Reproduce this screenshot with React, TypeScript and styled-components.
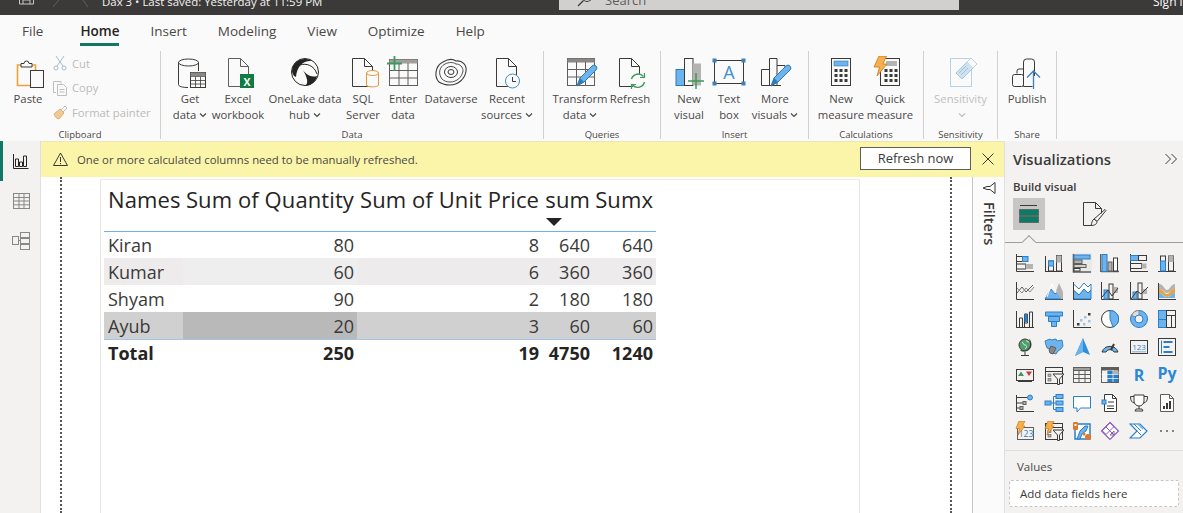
import React from "react";
import styled, { createGlobalStyle } from "styled-components";

const D = "#3b3a39";
const B = "#6db4ee";
const S = "#2b7fc9";
const G = "#b5b3b1";
const F = "'Open Sans', 'Noto Sans', sans-serif";

const Global = createGlobalStyle`
  html, body { margin: 0; padding: 0; background: #fff; }
  body { font-family: ${F}; overflow: hidden; }
  * { box-sizing: border-box; }
`;

const Shell = styled.div`
  width: 1183px; height: 513px; overflow: hidden; display: flex; flex-direction: column;
`;
const TitleBar = styled.header`
  height: 15px; flex: none; background: #3b3a39; display: flex; align-items: flex-end; overflow: hidden; color: #fff;
`;
const TitleLeft = styled.div`
  width: 559px; flex: none; display: flex; align-items: flex-end; padding: 0 0 5px 17px; height: 100%;
`;
const TitleText = styled.span`
  font-size: 11.45px; line-height: 16px; margin-left: 8px; white-space: nowrap; color: #f3f2f1;
`;
const SearchBox = styled.div`
  width: 400px; flex: none; height: 20px; margin-bottom: 5px; background: #d2d0ce; border-radius: 3px 3px 0 0;
  display: flex; align-items: flex-end; padding: 0 0 2px 18px; gap: 12px; font-size: 13px; line-height: 16px; color: #605e5c;
`;
const SignIn = styled.div`
  flex: 1; text-align: left; font-size: 12px; line-height: 16px; padding: 0 0 5px 194px; color: #fff; white-space: nowrap; min-width: 0;
`;
const Tabs = styled.nav`
  height: 35px; flex: none; background: #fafafa; display: flex; padding-left: 22px; gap: 31px;
`;
const Tab = styled.div<{ $on?: boolean }>`
  height: 31px; padding-top: 6px; font-size: 13.5px; line-height: 20px; color: ${p => (p.$on ? "#252423" : "#4a4847")};
  font-weight: ${p => (p.$on ? 600 : 400)}; margin-left: ${p => (p.$on ? "6px" : "0")};
  border-bottom: 3px solid ${p => (p.$on ? "#117865" : "transparent")}; white-space: nowrap;
`;
const Ribbon = styled.section`
  height: 91px; flex: none; background: #fafafa; display: flex; padding-top: 1px;
`;
const Group = styled.div<{ $w: number; $pad?: number }>`
  width: ${p => p.$w}px; height: 88px; flex: none; border-right: 1px solid #d2d0ce; display: flex; flex-direction: column; padding-left: ${p => p.$pad ?? 0}px;
`;
const GroupBody = styled.div`
  flex: 1; display: flex; padding-top: 5px; min-height: 0;
`;
const GroupLabel = styled.div<{ $pad?: number }>`
  height: 16px; margin-left: -${p => p.$pad ?? 0}px; margin-bottom: -4px; font-size: 9.5px; line-height: 16px; text-align: center; color: #4a4847;
`;
const RibBtn = styled.div<{ $w: number; $off?: boolean }>`
  width: ${p => p.$w}px; flex: none; display: flex; flex-direction: column; align-items: center;
  color: ${p => (p.$off ? "#c0bebc" : "#4a4847")}; font-size: 11.3px; line-height: 16px; text-align: center; white-space: nowrap;
  svg { display: block; }
`;
const RibIcon = styled.svg`
  width: 36px; height: 34px; flex: none; margin-bottom: 1px;
`;
const Chev = styled.svg`
  width: 8px; height: 6px; margin-left: 3px; display: inline-block !important; vertical-align: 1px;
`;
const SmallCol = styled.div`
  display: flex; flex-direction: column; margin: -5px 0 0 4px;
`;
const SmallItem = styled.div`
  height: 24.5px; flex: none; display: flex; align-items: center; gap: 5px; padding-left: 1px; font-size: 11.25px; color: #bdbbb9; white-space: nowrap;
`;
const Main = styled.div`
  flex: 1; display: flex; min-height: 0;
`;
const LeftNav = styled.aside`
  width: 41px; flex: none; background: #f3f2f1; border-right: 1px solid #e1dfdd; display: flex; flex-direction: column;
`;
const NavItem = styled.div<{ $on?: boolean }>`
  height: 40px; display: flex; align-items: center; justify-content: center; border-left: 3px solid ${p => (p.$on ? "#117865" : "transparent")};
  padding-right: 1px;
`;
const Center = styled.div`
  width: 963px; flex: none; display: flex; flex-direction: column;
`;
const Banner = styled.div`
  height: 36px; flex: none; background: #fbf5a9; display: flex; align-items: center; padding-left: 12px; color: #4a4847; font-size: 11.35px;
  box-shadow: inset 0 1px 0 #e9e6b8;
`;
const BannerText = styled.span`
  margin-left: 9px; flex: 1;
`;
const BannerButton = styled.div`
  width: 111px; height: 23px; background: #fff; border: 1px solid #605e5c; font-size: 13px; line-height: 21px; text-align: center; color: #3b3a39; margin-top: -1px;
`;
const BannerClose = styled.div`
  width: 33px; display: flex; justify-content: center;
`;
const Stage = styled.div`
  flex: 1; display: flex; min-height: 0; background: #fff;
`;
const Canvas = styled.div`
  width: 931px; flex: none; padding-left: 19px; overflow: hidden;
`;
const Page = styled.div`
  width: 892px; height: 100%; border-left: 2px dotted #555; border-right: 2px dotted #555; padding: 2px 0 0 38px;
`;
const Visual = styled.div`
  width: 760px; height: 400px; border: 1px solid #e9e8e7; padding-left: 3px;
`;
const Grid = styled.div`
  display: grid; grid-template-columns: 79px 174px 185px 51px 63px; width: 552px;
`;
const Head = styled.div`
  grid-column: 1 / -1; display: grid; grid-template-columns: subgrid; height: 52px; border-bottom: 1px solid #6fb0ea;
`;
const HeadCell = styled.div<{ $left?: boolean }>`
  font-size: 22px; line-height: 38px; color: #252423; white-space: nowrap; padding: 0 3px 0 4px; position: relative;
  letter-spacing: 0.1px; display: flex; justify-content: ${p => (p.$left ? "flex-start" : "flex-end")};
`;
const SortMark = styled.div`
  position: absolute; left: 4px; top: 38px; width: 0; height: 0; border-left: 8px solid transparent; border-right: 8px solid transparent; border-top: 8px solid #252423;
`;
const Row = styled.div<{ $bg: string; $h: number; $line?: boolean }>`
  grid-column: 1 / -1; display: grid; grid-template-columns: subgrid; height: ${p => p.$h}px; background: ${p => p.$bg};
  ${p => (p.$line ? "border-bottom: 1px solid #a0c6ea;" : "")}
`;
const Cell = styled.div<{ $left?: boolean; $bold?: boolean; $bar?: string }>`
  font-size: 18px; display: flex; align-items: center; justify-content: ${p => (p.$left ? "flex-start" : "flex-end")};
  padding: ${p => (p.$bold ? "0 3px 2px 4px" : "0 3px 0 4px")}; color: ${p => (p.$bold ? "#252423" : "#3b3a39")}; font-weight: ${p => (p.$bold ? 700 : 400)};
  background: ${p => p.$bar ?? "transparent"}; white-space: nowrap;
`;
const FilterStrip = styled.div`
  flex: 1; background: #fbfbfb; border-left: 1px solid #c8c6c4; display: flex; flex-direction: column; align-items: center; padding-top: 4px; gap: 7px;
`;
const FilterLabel = styled.div`
  writing-mode: vertical-rl; font-size: 14.5px; font-weight: 600; color: #3b3a39; line-height: 16px;
`;
const Panel = styled.aside`
  flex: 1; background: #f3f2f1; border-left: 1px solid #e1dfdd; display: flex; flex-direction: column; min-width: 0;
`;
const PanelHead = styled.div`
  display: flex; justify-content: space-between; align-items: center; padding: 8px 5px 1px 8px; height: 29px;
  font-size: 14.8px; font-weight: 600; line-height: 20px; color: #3b3a39;
`;
const BuildLabel = styled.div`
  margin-top: 9px; padding-left: 8px; font-size: 11.5px; font-weight: 600; line-height: 16px; color: #3b3a39;
`;
const TileRow = styled.div`
  display: flex; align-items: center; margin: 3px 0 0 8px; height: 32px; gap: 36px;
`;
const Tile = styled.div`
  width: 32px; height: 32px; background: #c8c6c4; display: flex; align-items: center; justify-content: center;
`;
const Divider = styled.div`
  margin-top: 12px; height: 1px; background: #a19f9d; position: relative;
`;
const Notch = styled.div`
  position: absolute; left: 19px; top: -5px; width: 10px; height: 10px; background: #f3f2f1; border-left: 1px solid #a19f9d; border-top: 1px solid #a19f9d; transform: rotate(45deg);
`;
const VizGrid = styled.div`
  margin-top: 6px; padding-left: 6px; display: grid; grid-template-columns: repeat(6, 28.4px); grid-auto-rows: 28px;
`;
const VizCell = styled.div`
  display: flex; align-items: center; justify-content: center;
`;
const PanelRule = styled.div`
  margin-top: 5px; height: 1px; background: #e1dfdd;
`;
const ValuesLabel = styled.div`
  margin-top: 8px; padding-left: 12px; font-size: 11.5px; line-height: 16px; color: #4a4847;
`;
const DropBox = styled.div`
  margin: 5px 0 0 4px; width: 170px; height: 27px; background: #fff; border: 1px dashed #c8c6c4; border-radius: 2px; font-size: 11.5px; line-height: 25px; padding-left: 10px; color: #3b3a39;
`;

const Chevron = () => (
  <Chev viewBox="0 0 8 6"><path d="M1 1.500 4 4.500 7 1.500" fill="none" stroke="currentColor" strokeWidth="1.200" /></Chev>
);

const Doc = ({ x = 7, y = 2, w = 21, h = 28, c = D }: { x?: number; y?: number; w?: number; h?: number; c?: string }) => (
  <path d={`M${x + .5} ${y + .5}h${w - 9}l8 8v${h - 8}h-${w - 1}z M${x + w - 9 + .5} ${y + .5}v8h8`} fill="none" stroke={c} />
);
const Pencil = ({ tx = 0, ty = 0 }: { tx?: number; ty?: number }) => (
  <g transform={`translate(${tx} ${ty})`}>
    <path d="M4 26 7 18 19 6a2.500 2.500 0 0 1 4 4L11 22z" fill={B} stroke="#2f79b8" />
    <path d="M4 26 7 18 11 22z" fill="#2f79b8" />
  </g>
);
const CalcKeys = ({ x, y }: { x: number; y: number }) => (
  <g fill={D}>
    {[0, 1, 2].flatMap(r => [0, 1, 2].map(c => <rect key={`${r}${c}`} x={x + c * 5} y={y + r * 5} width="3" height="3" />))}
  </g>
);

const I = ({ children }: { children: React.ReactNode }) => <RibIcon viewBox="0 0 36 34">{children}</RibIcon>;

const ribbonIcons: Record<string, React.ReactNode> = {
  paste: <>
    <path d="M12 9H7.500v20.500H21M20 9h5.500v5" fill="none" stroke="#eda33b" strokeWidth="1.600" />
    <path d="M11 11V7.500h3a2.500 2.500 0 0 1 5 0h3V11z" fill="#fafafa" stroke={D} />
    <rect x="20.500" y="14.500" width="13" height="17" fill="#fafafa" stroke={D} />
  </>,
  getdata: <>
    <path d="M6.500 6.500v22c0 2 4 3 9.500 3M26.500 6.500V15" fill="none" stroke={D} />
    <ellipse cx="16.500" cy="6.500" rx="10" ry="3.500" fill="none" stroke={D} />
    <rect x="18.500" y="16.500" width="15" height="15" fill="#fafafa" stroke={D} />
    <path d="M18.500 20.500h15M18.500 24.500h15M18.500 28h15M23.500 20v11M28.500 20v11" stroke={D} strokeWidth=".8" />
    <rect x="18.500" y="16.500" width="15" height="4" fill="#8a8886" />
  </>,
  excel: <>
    <Doc x={8} y={2} w={21} h={28} c="#605e5c" />
    <rect x="20" y="18" width="14" height="14" fill="#107c41" />
    <text x="27" y="29.500" fontSize="10.500" fontWeight="700" fill="#fff" textAnchor="middle" fontFamily={F}>X</text>
  </>,
  onelake: <>
    <circle cx="18" cy="16" r="13.500" fill="#fafafa" stroke="#252423" />
    <path d="M5 14C6 5 16 0 25 5 17 4 10 9 9 21 6 20 5 17 5 14z" fill="#252423" />
    <path d="M13 10c5 8 10 12 17 10-1 6-7 10-12 10 5-3 1-12-5-20z" fill="#252423" />
    <path d="M13 9c6-2 14 0 17 9" fill="none" stroke="#252423" />
  </>,
  sql: <>
    <Doc x={7} y={2} w={21} h={28} />
    <path d="M21.500 17v12c0 2.500 12 2.500 12 0V17" fill="#fafafa" stroke="#e39a3c" />
    <ellipse cx="27.500" cy="17" rx="6" ry="2.500" fill="#fafafa" stroke="#e39a3c" />
  </>,
  enter: <>
    <rect x="4.500" y="3.500" width="28" height="26" fill="none" stroke="#605e5c" />
    <rect x="4.500" y="3.500" width="28" height="4" fill="#a19f9d" />
    <path d="M4.500 14.500h28M4.500 22h28M14 7v22.500M23 7v22.500" stroke="#605e5c" />
    <path d="M9.500 0v15M2 7.500h15" stroke="#3d9a5a" strokeWidth="1.800" />
  </>,
  dataverse: <>
    <path d="M6 26C1 21 2 10 10 6c5-3 10-3 13-1 6-1 11 4 10 10-1 8-8 14-16 14-4 0-8-1-11-3z" fill="none" stroke={D} strokeWidth="1.100" />
    <path d="M9 23C5 18 6 11 12 8c4-2 8-2 11 0 4 0 7 3 7 7-1 6-6 11-13 11-3 0-6-1-8-3z" fill="none" stroke={D} strokeWidth=".9" />
    <ellipse cx="18" cy="16" rx="6.500" ry="5.500" fill="none" stroke={D} />
    <ellipse cx="18" cy="16" rx="3" ry="2.500" fill="none" stroke={D} />
  </>,
  recent: <>
    <Doc x={7} y={2} w={21} h={28} />
    <circle cx="23.500" cy="25" r="7" fill="#fafafa" stroke="#3f8fcf" />
    <path d="M23.500 21v4.500h3.500" fill="none" stroke={D} />
  </>,
  transform: <>
    <rect x="5.500" y="2.500" width="27" height="27" fill="none" stroke="#605e5c" />
    <rect x="5.500" y="2.500" width="27" height="4" fill="#8a8886" />
    <path d="M5.500 13.500h27M5.500 21h27M14.500 6v23M23.500 6v23" stroke="#605e5c" />
    <Pencil tx={11} ty={4} />
  </>,
  refresh: <>
    <Doc x={7} y={2} w={21} h={28} />
    <circle cx="26" cy="25" r="7.500" fill="#fafafa" stroke="none" />
    <path d="M19.500 23a7 7 0 0 1 12-2.500M32.500 26a7 7 0 0 1-12 3" fill="none" stroke="#3d9a5a" strokeWidth="1.400" />
    <path d="M32.500 17v4.500H28M19.500 33v-4.500H24" fill="none" stroke="#3d9a5a" strokeWidth="1.200" />
  </>,
  newvisual: <>
    <rect x="5" y="13.500" width="8.500" height="16" fill={B} stroke="#2f79b8" />
    <rect x="13.500" y="2.500" width="8.500" height="27" fill="#fafafa" stroke={D} />
    <rect x="22" y="7.500" width="8" height="22" fill={G} />
    <path d="M25 17v16M17 25h16" stroke="#3d9a5a" strokeWidth="1.500" />
  </>,
  textbox: <>
    <rect x="3.500" y="4.500" width="29" height="23" fill="none" stroke={D} />
    {[[3.500, 4.500], [32.500, 4.500], [3.500, 27.500], [32.500, 27.500]].map(([x, y]) => <rect key={`${x}${y}`} x={x - 2} y={y - 2} width="4" height="4" fill="#3f7fb8" />)}
    <text x="18" y="23" fontSize="18" fill="#3f8fcf" textAnchor="middle" fontFamily={F}>A</text>
  </>,
  more: <>
    <path d="M4.500 29.500V13.500h8M12.500 29.500V2.500h7.500V29.500M20 9.500h8V17M4.500 29.500H24" fill="none" stroke={D} />
    <Pencil tx={10} ty={4} />
  </>,
  newmeasure: <>
    <rect x="8.500" y="2.500" width="19" height="27" fill="#fafafa" stroke={D} />
    <rect x="11" y="5" width="14" height="5" fill={B} stroke="#2f79b8" strokeWidth=".6" />
    <CalcKeys x={11.500} y={13} />
  </>,
  quick: <>
    <rect x="8.500" y="2.500" width="19" height="27" fill="#fafafa" stroke={D} />
    <rect x="14" y="5" width="11" height="5" fill={G} />
    <CalcKeys x={12.500} y={13} />
    <path d="M7 0h7.500L11 8h4L5 20l2.500-9H2z" fill="#f5b04c" stroke="#c9781d" strokeWidth=".8" />
  </>,
  sensitivity: <>
    <rect x="7.500" y="2.500" width="21" height="28" fill="none" stroke="#b9d3e6" />
    <path d="M13 17 24 6l6 6-11 11z" fill="#cfe2ef" stroke="#a6c6da" />
    <path d="M16 17l7-7M18 19l7-7" stroke="#9fc0d6" />
    <path d="M24 6l4-4 6 6-4 4" fill="#fafafa" stroke="#b9d3e6" />
  </>,
  publish: <>
    <path d="M14.500 30.500V6a3 3 0 0 1 3-3h5a3 3 0 0 1 3 3v14" fill="none" stroke={D} />
    <path d="M8 17.500V15a2 2 0 0 1 2-2h5" fill="none" stroke={D} />
    <rect x="3.500" y="18.500" width="11" height="12" rx="2" fill="#fafafa" stroke={D} />
    <path d="M14.500 30.500h9" stroke={D} />
    <path d="M24.500 33V15M18 21.500l6.500-6.500 6.500 6.500" fill="none" stroke="#3f7fb8" strokeWidth="1.300" />
  </>,
};

const V = ({ children, size = 20 }: { children: React.ReactNode; size?: number }) => (
  <svg width={size} height={size} viewBox="0 0 20 20" fill="none" stroke={D} strokeWidth="1">{children}</svg>
);

const axisL = <path d="M1.500 1v17.500H19" />;
const axisB = <path d="M1 18.500h18" />;
const bolt = <path d="M4 0h6L7.500 5H10L3 14l1.500-6.500H1z" fill="#f5b04c" stroke="#c9781d" strokeWidth=".7" />;
const slicer = <>
  <rect x="1.500" y="2.500" width="17" height="16" />
  <path d="M1.500 6.500h17" />
  <rect x="4" y="9" width="3" height="2.500" fill={G} stroke="#605e5c" strokeWidth=".6" />
  <rect x="4" y="13.500" width="3" height="2.500" fill={G} stroke="#605e5c" strokeWidth=".6" />
  <path d="M9 9h11l-4.500 5v5.500h-2V14z" fill="#f3f2f1" stroke={D} />
</>;

const vizIcons: React.ReactNode[] = [
  <>{axisL}<rect x="1.500" y="3.500" width="6" height="5" /><rect x="7.500" y="3.500" width="5.500" height="5" fill={B} stroke={S} /><rect x="1.500" y="11" width="9" height="5" /><rect x="10.500" y="11" width="7.500" height="5" fill={G} stroke="none" /></>,
  <>{axisB}<path d="M1.500 18V3" /><rect x="4.500" y="8" width="5" height="10" /><rect x="4.500" y="8" width="5" height="5" fill={B} stroke={S} /><rect x="12.500" y="2.500" width="5" height="15.500" /><rect x="12.500" y="2.500" width="5" height="7" fill={G} stroke="none" /></>,
  <><rect x="0" y="0" width="20" height="20" fill="#e1dfdd" stroke="none" opacity=".5" /><path d="M1.500 1v18H19" strokeWidth="1.500" stroke="#605e5c" /><rect x="2" y="2" width="16" height="4" fill={B} stroke={S} /><rect x="2" y="7" width="8" height="3.500" fill={G} stroke="#605e5c" /><rect x="2" y="11.500" width="12" height="3" fill="#d2d0ce" stroke="#605e5c" /><rect x="2" y="15.500" width="6" height="2.500" fill="#fff" stroke={D} /></>,
  <><path d="M1 18.500h18" strokeWidth="1.500" stroke="#605e5c" /><rect x="2" y="1.500" width="5" height="17" fill={B} stroke={S} /><path d="M.5 1v18" stroke="#605e5c" strokeWidth="1.500" /><rect x="8" y="9" width="4" height="9" fill={G} stroke="#605e5c" /><rect x="13.500" y="5" width="4" height="13" fill="#fff" stroke={D} /></>,
  <>{axisL}<rect x="1.500" y="2.500" width="8" height="5" fill={B} stroke={S} /><rect x="9.500" y="2.500" width="8" height="5" /><rect x="1.500" y="10.500" width="11" height="5" /><rect x="12.500" y="10.500" width="5" height="5" fill={G} stroke="none" /></>,
  <>{axisB}<rect x="3.500" y="3" width="5" height="15" /><rect x="3.500" y="8" width="5" height="10" fill={B} stroke={S} /><rect x="11.500" y="3" width="5" height="15" /><rect x="11.500" y="3" width="5" height="6" fill={G} stroke="none" /></>,
  <>{axisL}<path d="M2 12 7 6l4 5 7-7" stroke="#605e5c" /><path d="M2 7l5 5 4-5 4 4 4-5" stroke="#8a8886" /></>,
  <>{axisB}<path d="M1 18 7 8l4 5 3-2 4 7z" fill={B} stroke={S} /><path d="M12 10 15 2l4 9v7h-2z" fill={G} stroke="none" /><path d="M3 16 8 3l4 8" stroke="#fff" /></>,
  <>{axisB}<path d="M1.500 9 7 14l5-6 4 4 3-3v9H1.500z" fill={B} stroke={S} /><path d="M1.500 3 7 8l5-6 4 4 3-3v6l-3 3-4-4-5 6-5.500-5z" fill="#fff" stroke={S} /><path d="M1.500 1v17" /></>,
  <>{axisL}<rect x="4" y="9" width="4" height="9" fill={B} stroke={S} /><rect x="9" y="3" width="4" height="15" /><rect x="14" y="6" width="4" height="6" fill={G} stroke="none" /><path d="M2 16 8 9l4 6 6-8" stroke={D} /></>,
  <>{axisL}<rect x="4" y="11" width="4" height="7" fill={B} stroke={S} /><rect x="9" y="2" width="4" height="16" /><rect x="14" y="8" width="4" height="5" fill={G} stroke="none" /><path d="M2 18 8 10l4 3 7-7" stroke={D} /></>,
  <>{axisB}<path d="M1.500 18V2" /><path d="M2 3c5 0 5 6 8 6s3-5 8-6v5c-5 1-5 4-8 4S7 8 2 8z" fill={G} stroke="none" /><path d="M2 8c5 0 5 5 8 5s3-5 8-5v4c-4 1-5 4-8 4s-4-4-8-4z" fill="#e8a33d" stroke="none" /><path d="M2 12c4 0 4 4 8 4s4-4 8-4v5H2z" fill={B} stroke="none" /></>,
  <>{axisB}<path d="M1.500 18V2" /><path d="M4.500 18V9h3v9M9.500 18V5h3v9h-3M14.500 18V3h3v15" /><rect x="9.500" y="5" width="3" height="8" fill={S} stroke="none" /></>,
  <><path d="M1.500 3h17v4h-17z" fill={B} stroke={S} /><path d="M4.500 7.500h11v5h-11z" fill={B} stroke={S} /><path d="M7.500 12.500h5v5h-5z" fill={B} stroke={S} /></>,
  <>{axisL}{[[5, 14, D], [8, 10, "#9fc5e6"], [11, 14, "#9fc5e6"], [12, 7, "#9fc5e6"], [16, 11, "#9fc5e6"], [16, 4, D]].map(([x, y, c]) => <rect key={`${x}${y}`} x={x as number} y={y as number} width="2.500" height="2.500" fill={c as string} stroke="none" />)}</>,
  <><circle cx="10" cy="10" r="8.500" fill="#fff" /><path d="M10 10V1.500a8.500 8.500 0 0 1 3 16.500z" fill={B} stroke={S} /></>,
  <><circle cx="10" cy="10" r="8.500" fill={B} stroke={S} /><path d="M10 1.500a8.500 8.500 0 0 0-7.500 5L7 8a3.500 3.500 0 0 1 3-1.500z" fill="#e1dfdd" stroke="#8a8886" /><circle cx="10" cy="10" r="4" fill="#f3f2f1" stroke={S} /></>,
  <><rect x="1.500" y="1.500" width="8" height="9" fill={B} stroke={S} /><rect x="1.500" y="10.500" width="8" height="8" fill={B} stroke={S} /><rect x="9.500" y="1.500" width="9" height="5" /><rect x="9.500" y="6.500" width="5" height="12" /><rect x="14.500" y="6.500" width="4" height="12" /></>,
  <><circle cx="10" cy="8" r="6" fill="#4e9f6c" stroke={D} /><path d="M7 5c2 1 1 3 3 3s2 3 0 4M12 3c-1 1 0 2 2 2" stroke="#dcebe0" /><path d="M14.500 2.500a7.500 7.500 0 0 1-9 11M10 15v3M6 18.500h8" stroke={D} /></>,
  <><path d="M1 4l5-2 1 1 5-1 1 2 5-1 1 6-2 3-3 2-2 3-3-1-2-4-4-1-1-3z" fill="#6db4ee" stroke="#3f7fb8" /><path d="M7 9l5 2-3 6-3-1-1-3z" fill="#8a8886" stroke="#605e5c" /></>,
  <><path d="M11 1 18 18l-7-3-8 4z" fill="#2f8fdb" stroke="none" /><path d="M11 1v14l-8 4z" fill="#6db4ee" stroke="none" /></>,
  <><path d="M2 15a8.500 8.500 0 0 1 16 0h-4a4.500 4.500 0 0 0-8 0z" fill={B} stroke={D} /><path d="M11 13 14 7" stroke={D} strokeWidth="2" /></>,
  <><rect x="1.500" y="3.500" width="17" height="13" /><text x="10" y="13" fontSize="8" fill={S} stroke="none" textAnchor="middle" fontFamily={F}>123</text><path d="M3 14.800h14" stroke={S} strokeWidth=".6" /></>,
  <><rect x="1.500" y="1.500" width="17" height="17" /><path d="M4.500 3.500v13" stroke={S} /><path d="M6.500 5h9M6.500 10h6M6.500 15h9" stroke={S} strokeWidth="2" /></>,
  <><rect x="1.500" y="4.500" width="17" height="11" /><path d="M3 16.500h14" stroke={D} /><path d="M6 6.500 9 11H3z" fill="#3d9a5a" stroke="none" /><path d="M11 6.500h6L14 11z" fill="#d13438" stroke="none" /></>,
  <>{slicer}</>,
  <><rect x="1.500" y="2.500" width="17" height="15" stroke="#605e5c" /><rect x="1.500" y="2.500" width="17" height="3" fill="#a19f9d" stroke="#605e5c" /><path d="M1.500 9.500h17M1.500 13.500h17M7 5v12M13 5v12" stroke="#605e5c" /></>,
  <><rect x="1.500" y="2.500" width="17" height="15" stroke="#605e5c" /><rect x="1.500" y="2.500" width="17" height="3" fill="#605e5c" stroke="none" /><rect x="7" y="6" width="11" height="11" fill={S} stroke="none" /><path d="M1.500 9.500h17M1.500 13.500h17M7 5v12M13 5v12" stroke="#fff" strokeWidth=".7" /><rect x="13" y="6" width="5.500" height="3" fill={G} stroke="none" /></>,
  <text x="10" y="16" fontSize="16" fontWeight="700" fill="#2b88d8" stroke="none" textAnchor="middle" fontFamily={F}>R</text>,
  <text x="10" y="14" fontSize="16" fontWeight="700" fill="#2b88d8" stroke="none" textAnchor="middle" fontFamily={F}>Py</text>,
  <><path d="M1.500 2v16.500H19" /><path d="M2 4.500h11M2 10h6M2 15h3" /><circle cx="15" cy="4.500" r="2.500" fill={B} stroke={S} /><rect x="8" y="8.500" width="3" height="3" fill={G} stroke="#605e5c" /><rect x="5" y="13.500" width="3" height="3" fill={G} stroke="#605e5c" /></>,
  <><rect x="1" y="8" width="6" height="4" fill={B} stroke={S} /><rect x="12" y="1.500" width="7" height="4" fill={B} stroke={S} /><rect x="12" y="8" width="7" height="4" fill={B} stroke={S} /><rect x="12" y="14.500" width="7" height="4" fill={B} stroke={S} /><path d="M7 10h5M9.500 3.500v13M9.500 3.500H12M9.500 16.500H12" stroke={S} /></>,
  <><path d="M1.500 3.500h17v11.500H8.500L5 19v-4H1.500z" fill="#fff" stroke={S} /></>,
  <><path d="M4.500 1.500h8l4 4v13h-12z" fill="#fff" stroke={D} /><path d="M12.500 1.500v4h4" /><rect x="2" y="7" width="4" height="4" fill={B} stroke={S} /><path d="M8 9h6M7 13h7M7 15.500h7" stroke={D} /></>,
  <><path d="M5 2h10v6a5 5 0 0 1-10 0z" fill="#fff" stroke={D} /><path d="M5 3.500H1.500c0 4 1 6 4 6.500M15 3.500h3.500c0 4-1 6-4 6.500M10 13v3M6 18h8l-1-2H7z" /></>,
  <><path d="M3.500 1.500h9l4 4v13h-13z" fill="#fafafa" stroke="#605e5c" /><path d="M12.500 1.500v4h4" stroke="#605e5c" /><path d="M6 16h2v-3H6zM9 16h2v-6H9zM12 16h2V8h-2z" fill={D} stroke="none" /></>,
  <><rect x="2.500" y="6.500" width="16" height="12" stroke="#605e5c" /><text x="11" y="16" fontSize="8.500" fill={S} stroke="none" textAnchor="middle" fontFamily={F}>123</text>{bolt}</>,
  <>{slicer}{bolt}</>,
  <><path d="M3 3h15v15H3z" fill="#fff" stroke={S} strokeWidth="1.500" /><path d="M8 10l5-5h3l-2 5-4 3-2 5H5z" fill={B} stroke={S} /><rect x="1" y="1" width="5" height="8" rx="1" fill="#d97b2b" stroke="none" /><rect x="2.500" y="3" width="2" height="2" fill="#fff" stroke="none" /><circle cx="16" cy="16" r="3" fill="#d97b2b" stroke="none" /><circle cx="12" cy="13" r="1.500" fill="#d97b2b" stroke="none" /></>,
  <><path d="M10 1.500 18.500 10 10 18.500 1.500 10z" fill="#fff" stroke="#8e5bb5" strokeWidth="1.200" /><path d="M10 1.500l4 4-8 8-4-4zM14 10l-4 4 4 0z" stroke="#8e5bb5" /><path d="M6 6l8 8" stroke="#8e5bb5" /></>,
  <><path d="M1 3h10l7 7-7 7H1l7-7z" fill="#fff" stroke={S} strokeWidth="1.200" /><path d="M5 3l7 7M8 10l4 4" stroke={S} /><path d="M9 3l5 5" stroke={B} strokeWidth="1.500" /></>,
  <><circle cx="4" cy="10" r="1" fill="#605e5c" stroke="none" /><circle cx="10" cy="10" r="1" fill="#605e5c" stroke="none" /><circle cx="16" cy="10" r="1" fill="#605e5c" stroke="none" /></>,
];

type Btn = { w: number; icon: string; l1: string; l2?: string; chev?: boolean; off?: boolean };
const dataBtns: Btn[] = [
  { w: 44, icon: "getdata", l1: "Get", l2: "data", chev: true },
  { w: 52, icon: "excel", l1: "Excel", l2: "workbook" },
  { w: 82, icon: "onelake", l1: "OneLake data", l2: "hub", chev: true },
  { w: 34, icon: "sql", l1: "SQL", l2: "Server" },
  { w: 46, icon: "enter", l1: "Enter", l2: "data" },
  { w: 50, icon: "dataverse", l1: "Dataverse" },
  { w: 62, icon: "recent", l1: "Recent", l2: "sources", chev: true },
];
const queryBtns: Btn[] = [
  { w: 56, icon: "transform", l1: "Transform", l2: "data", chev: true },
  { w: 44, icon: "refresh", l1: "Refresh" },
];
const insertBtns: Btn[] = [
  { w: 40, icon: "newvisual", l1: "New", l2: "visual" },
  { w: 40, icon: "textbox", l1: "Text", l2: "box" },
  { w: 52, icon: "more", l1: "More", l2: "visuals", chev: true },
];
const calcBtns: Btn[] = [
  { w: 52, icon: "newmeasure", l1: "New", l2: "measure" },
  { w: 46, icon: "quick", l1: "Quick", l2: "measure" },
];

const RB = ({ b }: { b: Btn }) => (
  <RibBtn $w={b.w} $off={b.off}>
    <I>{ribbonIcons[b.icon]}</I>
    <span>{b.l1}</span>
    {(b.l2 || b.chev) && <span>{b.l2}{b.chev && <Chevron />}</span>}
  </RibBtn>
);

const RGroup = ({ w, pad, label, btns }: { w: number; pad: number; label: string; btns: Btn[] }) => (
  <Group $w={w} $pad={pad}>
    <GroupBody>{btns.map(b => <RB key={b.icon} b={b} />)}</GroupBody>
    <GroupLabel $pad={pad}>{label}</GroupLabel>
  </Group>
);

const rows = [
  { n: "Kiran", q: "80", u: "8", s: "640", x: "640", bg: "#fff", bar: undefined, h: 26 },
  { n: "Kumar", q: "60", u: "6", s: "360", x: "360", bg: "#edebec", bar: "#eeeeef", h: 27 },
  { n: "Shyam", q: "90", u: "2", s: "180", x: "180", bg: "#fff", bar: undefined, h: 27 },
  { n: "Ayub", q: "20", u: "3", s: "60", x: "60", bg: "#d1d0d0", bar: "#bab9b9", h: 28 },
];

export default function App() {
  return (
    <Shell>
      <Global />
      <TitleBar>
        <TitleLeft>
          <svg width="20" height="14" viewBox="0 0 20 14" fill="none" stroke="#c8c6c4"><path d="M2.500 -4h14v12h-14zM6 8V4h7v4" /></svg>
          <svg width="49" height="12" viewBox="0 0 49 12" fill="none" stroke="#605e5c" style={{ marginLeft: 8 }}><path d="M17 -2 8 9M35 -2l8 11" /></svg>
          <TitleText>Dax 3 • Last saved: Yesterday at 11:59 PM</TitleText>
        </TitleLeft>
        <SearchBox>
          <svg width="16" height="10" viewBox="0 0 16 10" fill="none" stroke="#3b3a39" strokeWidth="1.200"><circle cx="10" cy="-1" r="4.500" /><path d="M6.500 2.500 1 8" /></svg>
          <span>Search</span>
        </SearchBox>
        <SignIn>Sign in</SignIn>
      </TitleBar>
      <Tabs>
        <Tab>File</Tab>
        <Tab $on>Home</Tab>
        <Tab>Insert</Tab>
        <Tab>Modeling</Tab>
        <Tab>View</Tab>
        <Tab>Optimize</Tab>
        <Tab>Help</Tab>
      </Tabs>
      <Ribbon>
        <Group $w={161} $pad={8}>
          <GroupBody>
            <RB b={{ w: 40, icon: "paste", l1: "Paste" }} />
            <SmallCol>
              <SmallItem>
                <svg width="14" height="16" viewBox="0 0 14 16" fill="none" stroke="#a9bccb"><path d="M3 1l7 10M11 1 4 11" /><circle cx="3" cy="13" r="2" /><circle cx="11" cy="13" r="2" /></svg>
                Cut
              </SmallItem>
              <SmallItem>
                <svg width="14" height="16" viewBox="0 0 14 16" fill="none" stroke="#c0bebc"><path d="M3 12.500H.5v-11H8v2" /><path d="M4.500 4.500h6l3 3v8h-9z" /><path d="M6.500 9.500h5M6.500 12h5" /></svg>
                Copy
              </SmallItem>
              <SmallItem>
                <svg width="14" height="16" viewBox="0 0 14 16" fill="none" stroke="#c0bebc"><path d="M8 6l4-4 2 2-4 4" /><path d="M1 10l6-5 4 4-5 6c-2 0-5-3-5-5z" fill="#f2c894" stroke="#dfb07a" /></svg>
                Format painter
              </SmallItem>
            </SmallCol>
          </GroupBody>
          <GroupLabel $pad={8}>Clipboard</GroupLabel>
        </Group>
        <RGroup w={383} pad={7} label="Data" btns={dataBtns} />
        <RGroup w={117} pad={8} label="Queries" btns={queryBtns} />
        <RGroup w={148} pad={8} label="Insert" btns={insertBtns} />
        <RGroup w={115} pad={6} label="Calculations" btns={calcBtns} />
        <RGroup w={74} pad={0} label="Sensitivity" btns={[{ w: 73, icon: "sensitivity", l1: "Sensitivity", l2: "", chev: true, off: true }]} />
        <RGroup w={59} pad={0} label="Share" btns={[{ w: 58, icon: "publish", l1: "Publish" }]} />
      </Ribbon>
      <Main>
        <LeftNav>
          <NavItem $on>
            <svg width="16" height="16" viewBox="0 0 16 16" fill="none" stroke="#252423"><path d="M.5 1v14.500h15M2.500 13.500V6h3v7.500zM6.500 13.500V9h3v4.500zM10.500 13.500V3h3v10.500z" /></svg>
          </NavItem>
          <NavItem>
            <svg width="17" height="16" viewBox="0 0 17 16" fill="none" stroke="#8a8886"><rect x=".5" y=".5" width="16" height="15" /><path d="M.5 4.500h16M.5 8h16M.5 11.800h16M6 .5v15M11 .5v15" /></svg>
          </NavItem>
          <NavItem>
            <svg width="18" height="18" viewBox="0 0 18 18" fill="none" stroke="#8a8886"><rect x=".5" y="4.500" width="6" height="8" /><rect x="8.500" y=".5" width="9" height="5" /><rect x="8.500" y="6.500" width="9" height="5" /><rect x="8.500" y="12.500" width="9" height="5" /><path d="M6.500 8.500h2" /></svg>
          </NavItem>
        </LeftNav>
        <Center>
          <Banner>
            <svg width="15" height="14" viewBox="0 0 15 14" fill="none" stroke="#3b3a39"><path d="M7.500 1 14.500 13.500H.5z" /><path d="M7.500 5v5M7.500 11v1.200" /></svg>
            <BannerText>One or more calculated columns need to be manually refreshed.</BannerText>
            <BannerButton>Refresh now</BannerButton>
            <BannerClose>
              <svg width="12" height="12" viewBox="0 0 12 12" stroke="#3b3a39" fill="none"><path d="M.5.500l11 11M11.500.500l-11 11" /></svg>
            </BannerClose>
          </Banner>
          <Stage>
            <Canvas>
              <Page>
                <Visual>
                  <Grid>
                    <Head>
                      <HeadCell $left>Names</HeadCell>
                      <HeadCell>Sum of Quantity</HeadCell>
                      <HeadCell>Sum of Unit Price</HeadCell>
                      <HeadCell>sum<SortMark /></HeadCell>
                      <HeadCell>Sumx</HeadCell>
                    </Head>
                    {rows.map((r, i) => (
                      <Row key={r.n} $bg={r.bg} $h={r.h} $line={i === 3}>
                        <Cell $left>{r.n}</Cell>
                        <Cell $bar={r.bar}>{r.q}</Cell>
                        <Cell>{r.u}</Cell>
                        <Cell>{r.s}</Cell>
                        <Cell>{r.x}</Cell>
                      </Row>
                    ))}
                    <Row $bg="#fff" $h={27}>
                      <Cell $left $bold>Total</Cell>
                      <Cell $bold>250</Cell>
                      <Cell $bold>19</Cell>
                      <Cell $bold>4750</Cell>
                      <Cell $bold>1240</Cell>
                    </Row>
                  </Grid>
                </Visual>
              </Page>
            </Canvas>
            <FilterStrip>
              <svg width="14" height="14" viewBox="0 0 14 14" fill="none" stroke="#3b3a39"><path d="M13 1.500v11L8 8.500H5L1 7l4-1.500h3z" /></svg>
              <FilterLabel>Filters</FilterLabel>
            </FilterStrip>
          </Stage>
        </Center>
        <Panel>
          <PanelHead>
            <span>Visualizations</span>
            <svg width="14" height="12" viewBox="0 0 14 12" fill="none" stroke="#3b3a39"><path d="M1.500 1l5 5-5 5M7.500 1l5 5-5 5" /></svg>
          </PanelHead>
          <BuildLabel>Build visual</BuildLabel>
          <TileRow>
            <Tile>
              <svg width="26" height="26" viewBox="0 0 26 26">
                <path d="M4 4.500h17" stroke="#3b3a39" />
                <rect x="3.500" y="8.500" width="19" height="6" fill="#117865" stroke="#3b3a39" strokeDasharray="1 1" />
                <rect x="3.500" y="15.500" width="19" height="6" fill="#117865" stroke="#3b3a39" strokeDasharray="1 1" />
              </svg>
            </Tile>
            <svg width="26" height="26" viewBox="0 0 26 26" fill="none" stroke="#3b3a39">
              <path d="M2.500 1.500h12l6 6v5M2.500 1.500v23H10M14.500 1.500v6h6" />
              <path d="M13 18 24 8.500l1 1-9 11z" />
              <path d="M10 24.500c3 0 6-1 6-4l-3-2.500c-2 1-2 4-3 6.500z" fill="#f3f2f1" />
            </svg>
          </TileRow>
          <Divider><Notch /></Divider>
          <VizGrid>
            {vizIcons.map((icon, i) => <VizCell key={i}><V>{icon}</V></VizCell>)}
          </VizGrid>
          <PanelRule />
          <ValuesLabel>Values</ValuesLabel>
          <DropBox>Add data fields here</DropBox>
        </Panel>
      </Main>
    </Shell>
  );
}
